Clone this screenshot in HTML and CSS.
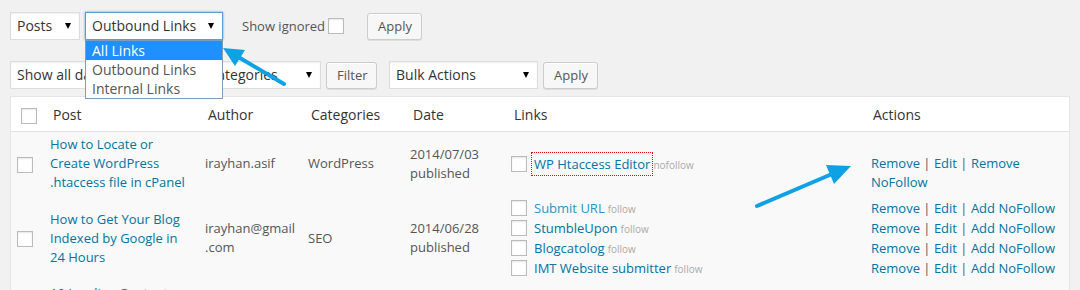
FILE: index.html
```html
<!DOCTYPE html>
<html lang="en">

<head>
    <meta charset="UTF-8">
    <meta name="viewport" content="width=device-width, initial-scale=1.0">
    <title>Links</title>
    <link rel="stylesheet" href="styles.css">
</head>

<body>
    <div class="wrap">
        <div class="tablenav top">
            <div class="select sel-type">Posts</div>
            <div class="select sel-links focused">Outbound Links</div>
            <label class="ignored"><span class="ignored-text">Show ignored</span><input type="checkbox"></label>
            <button class="button btn-apply1">Apply</button>
        </div>

        <div class="tablenav">
            <div class="select sel-dates">Show all dates</div>
            <div class="select sel-cats">All categories</div>
            <button class="button btn-filter">Filter</button>
            <div class="select sel-bulk">Bulk Actions</div>
            <button class="button btn-apply2">Apply</button>
        </div>

        <table class="links-table">
            <thead>
                <tr>
                    <th class="col-cb"><input type="checkbox"></th>
                    <th class="col-post">Post</th>
                    <th class="col-author">Author</th>
                    <th class="col-cats">Categories</th>
                    <th class="col-date">Date</th>
                    <th class="col-links">Links</th>
                    <th class="col-actions">Actions</th>
                </tr>
            </thead>
            <tbody>
                <tr>
                    <td class="col-cb"><input type="checkbox"></td>
                    <td><a href="#">How to Locate or Create WordPress .htaccess file in cPanel</a></td>
                    <td>irayhan.asif</td>
                    <td>WordPress</td>
                    <td>2014/07/03<br>published</td>
                    <td>
                        <ul class="link-list">
                            <li><input type="checkbox"><a href="#" class="focus">WP Htaccess Editor</a><span class="rel">nofollow</span></li>
                        </ul>
                    </td>
                    <td class="shift">
                        <a href="#">Remove</a> | <a href="#">Edit</a> | <a href="#">Remove NoFollow</a>
                    </td>
                </tr>
                <tr>
                    <td class="col-cb"><input type="checkbox"></td>
                    <td><a href="#">How to Get Your Blog Indexed by Google in 24 Hours</a></td>
                    <td>irayhan@gmail<wbr>.com</td>
                    <td>SEO</td>
                    <td>2014/06/28<br>published</td>
                    <td>
                        <ul class="link-list">
                            <li><input type="checkbox"><a href="#" class="hover">Submit URL</a><span class="rel">follow</span></li>
                            <li><input type="checkbox"><a href="#">StumbleUpon</a><span class="rel">follow</span></li>
                            <li><input type="checkbox"><a href="#">Blogcatolog</a><span class="rel">follow</span></li>
                            <li><input type="checkbox"><a href="#">IMT Website submitter</a><span class="rel">follow</span></li>
                        </ul>
                    </td>
                    <td>
                        <ul class="link-list">
                            <li><a href="#">Remove</a> | <a href="#">Edit</a> | <a href="#">Add NoFollow</a></li>
                            <li><a href="#">Remove</a> | <a href="#">Edit</a> | <a href="#">Add NoFollow</a></li>
                            <li><a href="#">Remove</a> | <a href="#">Edit</a> | <a href="#">Add NoFollow</a></li>
                            <li><a href="#">Remove</a> | <a href="#">Edit</a> | <a href="#">Add NoFollow</a></li>
                        </ul>
                    </td>
                </tr>
                <tr>
                    <td class="col-cb"><input type="checkbox"></td>
                    <td><a href="#">10 Leading Content Marketing Blogs You Should Follow for Better Traffic</a></td>
                    <td>irayhan.asif</td>
                    <td>Blogging</td>
                    <td>2014/06/20<br>published</td>
                    <td></td>
                    <td></td>
                </tr>
            </tbody>
        </table>

        <!-- open dropdown of the links select -->
        <ul class="dropdown">
            <li class="active">All Links</li>
            <li>Outbound Links</li>
            <li>Internal Links</li>
        </ul>

        <!-- annotation arrows -->
        <svg class="arrows" width="1080" height="290" viewBox="0 0 1080 290">
            <line x1="284" y1="84" x2="240" y2="58" stroke="#0ea1e3" stroke-width="4" stroke-linecap="round" />
            <polygon points="223,48 245,50 235,66" fill="#0ea1e3" />
            <line x1="757" y1="206" x2="832" y2="174" stroke="#0ea1e3" stroke-width="4" stroke-linecap="round" />
            <polygon points="851,166 826,165 834,184" fill="#0ea1e3" />
        </svg>
    </div>
</body>

</html>
```

FILE: styles.css
```css
body {
    margin: 0;
    background-color: #f1f1f1;
    font-family: "Open Sans", "Liberation Sans", Arial, sans-serif;
    font-size: 13px;
    color: #555;
}

.wrap {
    position: relative;
    height: 290px;
    padding: 12px 10px 0 10px;
    overflow: hidden;
    box-sizing: border-box;
}

.tablenav {
    display: flex;
    align-items: center;
    height: 28px;
    margin-bottom: 7px;
}

.tablenav.top {
    margin-bottom: 21px;
}

.select {
    position: relative;
    height: 28px;
    line-height: 26px;
    padding: 0 6px;
    background-color: #fff;
    border: 1px solid #ddd;
    box-shadow: inset 0 1px 2px rgba(0, 0, 0, 0.07);
    box-sizing: border-box;
    font-size: 14px;
    color: #333;
    white-space: nowrap;
}

.select::after {
    content: "";
    position: absolute;
    right: 8px;
    top: 10px;
    border-left: 3px solid transparent;
    border-right: 3px solid transparent;
    border-top: 6px solid #000;
}

.select.focused {
    border-color: #5b9dd9;
    box-shadow: 0 0 2px rgba(30, 140, 190, 0.8);
}

.sel-type { width: 70px; }
.sel-links { width: 138px; margin-left: 5px; }
.sel-dates { width: 169px; }
.sel-cats { width: 137px; margin-left: 5px; }
.sel-bulk { width: 149px; margin-left: 12px; }

.ignored {
    display: flex;
    align-items: center;
    margin-left: 19px;
    font-size: 13px;
    color: #555;
}

.ignored-text {
    width: 86px;
    white-space: nowrap;
}

.ignored input {
    margin: 0;
}

.button {
    height: 27px;
    padding: 0 10px;
    background-color: #f7f7f7;
    border: 1px solid #ccc;
    border-radius: 3px;
    box-shadow: inset 0 1px 0 #fff, 0 1px 0 rgba(0, 0, 0, 0.08);
    font-family: inherit;
    font-size: 13px;
    color: #555;
    cursor: pointer;
}

.btn-apply1 { width: 55px; margin-left: 23px; }
.btn-filter { width: 51px; margin-left: 5px; }
.btn-apply2 { width: 55px; margin-left: 5px; }

input[type="checkbox"] {
    appearance: none;
    -webkit-appearance: none;
    width: 16px;
    height: 16px;
    margin: 0;
    background-color: #fff;
    border: 1px solid #bbb;
    box-shadow: inset 0 1px 2px rgba(0, 0, 0, 0.1);
    box-sizing: border-box;
    vertical-align: middle;
}

.links-table {
    width: 100%;
    table-layout: fixed;
    border-spacing: 0;
    border: 1px solid #e5e5e5;
    background-color: #f9f9f9;
}

.links-table th {
    height: 35px;
    padding: 0 9px;
    background-color: #fff;
    border-bottom: 1px solid #e1e1e1;
    text-align: left;
    font-weight: normal;
    font-size: 14px;
    color: #333;
    box-sizing: border-box;
}

.links-table td {
    padding: 3px 10px 3px 6px;
    line-height: 19px;
    vertical-align: middle;
    box-sizing: border-box;
}

.links-table th.col-cb { padding-left: 10px; }
.links-table td.col-cb { padding-left: 6px; }
.links-table td.shift { padding-top: 21px; }

.col-cb { width: 33px; }
.col-post { width: 155px; }
.col-author { width: 103px; }
.col-cats { width: 102px; }
.col-date { width: 101px; }
.col-links { width: 359px; }

.links-table td:last-child {
    padding-left: 7px;
}

a {
    color: #0074a2;
    text-decoration: none;
}

a.hover {
    color: #2a95c5;
}

a.focus {
    outline: 1px dotted #e00;
    outline-offset: 2px;
}

.link-list {
    list-style: none;
    margin: 0;
    padding: 0;
}

.link-list li {
    height: 20px;
    line-height: 20px;
    white-space: nowrap;
}

.link-list input {
    margin-right: 7px;
    vertical-align: -3px;
}

.rel {
    margin-left: 3px;
    font-size: 10px;
    color: #aaa;
}

.dropdown {
    position: absolute;
    left: 85px;
    top: 40px;
    width: 138px;
    margin: 0;
    padding: 0;
    list-style: none;
    background-color: #fff;
    border: 1px solid #7f9db9;
    box-sizing: border-box;
    font-size: 14px;
    color: #555;
}

.dropdown li {
    height: 19px;
    line-height: 19px;
    padding-left: 6px;
}

.dropdown li.active {
    background-color: #1e90ff;
    color: #fff;
}

.arrows {
    position: absolute;
    left: 0;
    top: 0;
    pointer-events: none;
}
```
